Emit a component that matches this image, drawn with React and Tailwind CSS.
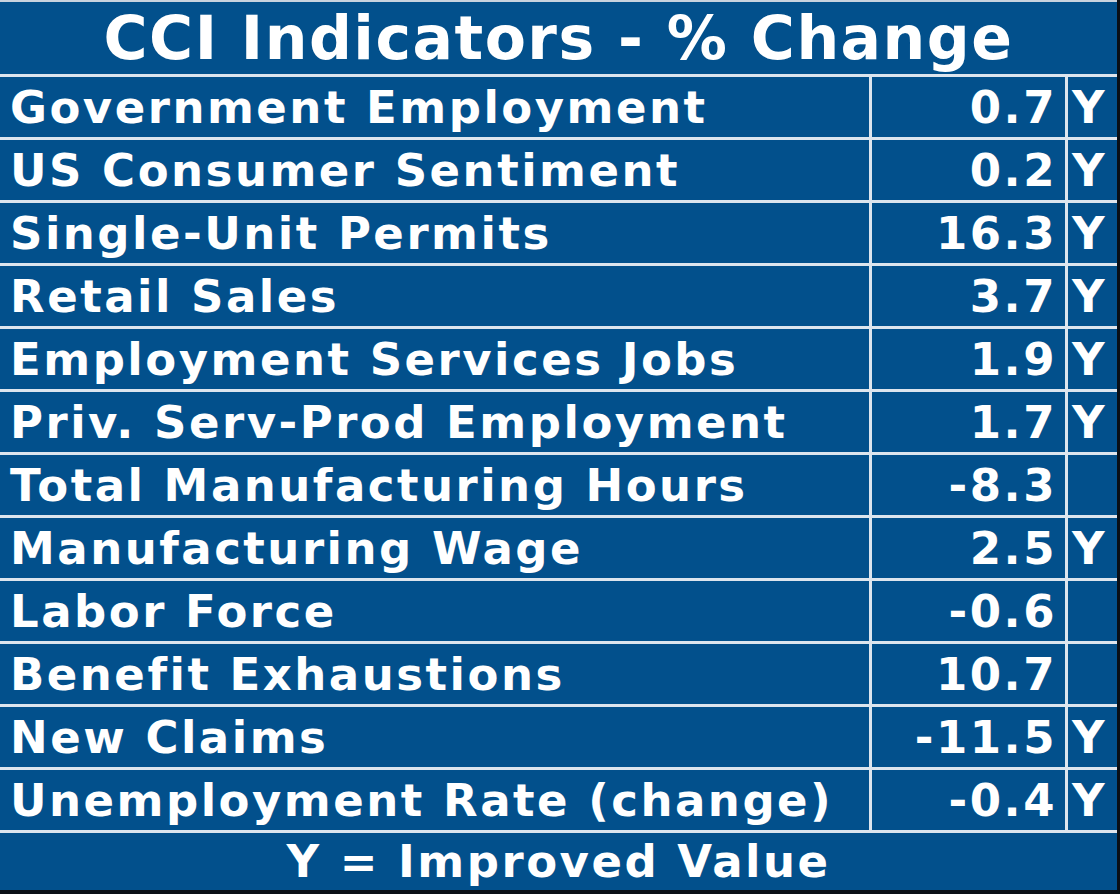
const rows = [
  ["Government Employment", "0.7", "Y"],
  ["US Consumer Sentiment", "0.2", "Y"],
  ["Single-Unit Permits", "16.3", "Y"],
  ["Retail Sales", "3.7", "Y"],
  ["Employment Services Jobs", "1.9", "Y"],
  ["Priv. Serv-Prod Employment", "1.7", "Y"],
  ["Total Manufacturing Hours", "-8.3", ""],
  ["Manufacturing Wage", "2.5", "Y"],
  ["Labor Force", "-0.6", ""],
  ["Benefit Exhaustions", "10.7", ""],
  ["New Claims", "-11.5", "Y"],
  ["Unemployment Rate (change)", "-0.4", "Y"],
];

export default function App() {
  return (
    <div className="w-[1120px] h-[894px] bg-[#0a0f16]" style={{ fontFamily: '"DejaVu Sans", Verdana, sans-serif' }}>
      <div className="w-[1117px] h-[890px] bg-[#02508c] text-white font-bold flex flex-col border-t-2 border-[#c9d3de]">
        <div className="h-[72px] flex items-center justify-center text-[60px] leading-none tracking-[1.5px]">
          CCI Indicators - % Change
        </div>
        {rows.map(([label, val, y]) => (
          <div key={label} className="h-[63px] border-t-[3px] border-[#dde5ee] flex text-[45px] leading-none tracking-[2.5px]">
            <div className="w-[869px] flex items-center pl-[10px]">{label}</div>
            <div className="w-[196px] border-l-[3px] border-[#dde5ee] flex items-center justify-end pr-[8px]">{val}</div>
            <div className="flex-1 border-l-[3px] border-[#dde5ee] flex items-center pl-[4px]">{y}</div>
          </div>
        ))}
        <div className="flex-1 border-t-[3px] border-[#dde5ee] flex items-center justify-center text-[45px] leading-none tracking-[2.5px]">
          Y = Improved Value
        </div>
      </div>
    </div>
  );
}
